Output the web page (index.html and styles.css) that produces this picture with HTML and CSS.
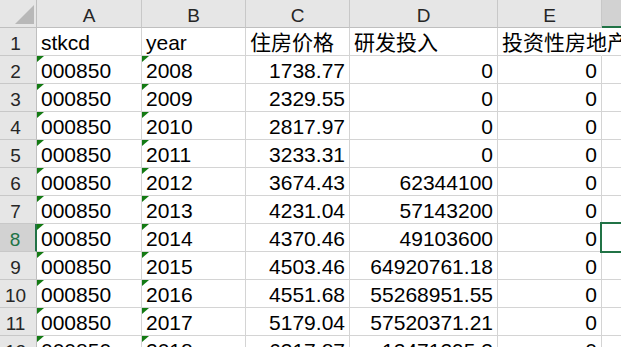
FILE: index.html
```html
<!DOCTYPE html>
<html lang="zh">
<head>
<meta charset="utf-8">
<title>Sheet</title>
<link rel="stylesheet" href="styles.css">
</head>
<body>
<div class="sheet">
  <div class="corner"></div>
  <div class="ch">A</div>
  <div class="ch">B</div>
  <div class="ch">C</div>
  <div class="ch">D</div>
  <div class="ch">E</div>
  <div class="ch sel"></div>

  <div class="rh">1</div>
  <div class="cell">stkcd</div>
  <div class="cell">year</div>
  <div class="cell">住房价格</div>
  <div class="cell">研发投入</div>
  <div class="cell ovf">投资性房地产</div>
  <div class="cell"></div>

  <div class="rh">2</div>
  <div class="cell flag">000850</div>
  <div class="cell flag">2008</div>
  <div class="cell num">1738.77</div>
  <div class="cell num">0</div>
  <div class="cell num">0</div>
  <div class="cell"></div>

  <div class="rh">3</div>
  <div class="cell flag">000850</div>
  <div class="cell flag">2009</div>
  <div class="cell num">2329.55</div>
  <div class="cell num">0</div>
  <div class="cell num">0</div>
  <div class="cell"></div>

  <div class="rh">4</div>
  <div class="cell flag">000850</div>
  <div class="cell flag">2010</div>
  <div class="cell num">2817.97</div>
  <div class="cell num">0</div>
  <div class="cell num">0</div>
  <div class="cell"></div>

  <div class="rh">5</div>
  <div class="cell flag">000850</div>
  <div class="cell flag">2011</div>
  <div class="cell num">3233.31</div>
  <div class="cell num">0</div>
  <div class="cell num">0</div>
  <div class="cell"></div>

  <div class="rh">6</div>
  <div class="cell flag">000850</div>
  <div class="cell flag">2012</div>
  <div class="cell num">3674.43</div>
  <div class="cell num">62344100</div>
  <div class="cell num">0</div>
  <div class="cell"></div>

  <div class="rh">7</div>
  <div class="cell flag">000850</div>
  <div class="cell flag">2013</div>
  <div class="cell num">4231.04</div>
  <div class="cell num">57143200</div>
  <div class="cell num">0</div>
  <div class="cell"></div>

  <div class="rh sel">8</div>
  <div class="cell flag">000850</div>
  <div class="cell flag">2014</div>
  <div class="cell num">4370.46</div>
  <div class="cell num">49103600</div>
  <div class="cell num">0</div>
  <div class="cell active"></div>

  <div class="rh">9</div>
  <div class="cell flag">000850</div>
  <div class="cell flag">2015</div>
  <div class="cell num">4503.46</div>
  <div class="cell num">64920761.18</div>
  <div class="cell num">0</div>
  <div class="cell"></div>

  <div class="rh">10</div>
  <div class="cell flag">000850</div>
  <div class="cell flag">2016</div>
  <div class="cell num">4551.68</div>
  <div class="cell num">55268951.55</div>
  <div class="cell num">0</div>
  <div class="cell"></div>

  <div class="rh">11</div>
  <div class="cell flag">000850</div>
  <div class="cell flag">2017</div>
  <div class="cell num">5179.04</div>
  <div class="cell num">57520371.21</div>
  <div class="cell num">0</div>
  <div class="cell"></div>

  <div class="rh">12</div>
  <div class="cell flag">000850</div>
  <div class="cell flag">2018</div>
  <div class="cell num">6317.87</div>
  <div class="cell num">12471295.3</div>
  <div class="cell num">0</div>
  <div class="cell"></div>
</div>
</body>
</html>
```

FILE: styles.css
```css
html, body {
  margin: 0;
  padding: 0;
  background: #ffffff;
  overflow: hidden;
}

.sheet {
  display: grid;
  grid-template-columns: 37px 105px 104px 104px 148px 104px 104px;
  grid-auto-rows: 28px;
  width: 621px;
  height: 347px;
  overflow: hidden;
  font-family: "Liberation Sans", "Noto Sans CJK SC", sans-serif;
}

.sheet > div {
  box-sizing: border-box;
  position: relative;
  display: flex;
  align-items: flex-end;
  white-space: nowrap;
}

.corner {
  background: #e6e6e6;
  border-right: 1px solid #bfbfbf;
  border-bottom: 1px solid #bfbfbf;
}

.corner::after {
  content: "";
  position: absolute;
  right: 2px;
  bottom: 3px;
  width: 0;
  height: 0;
  border-left: 19px solid transparent;
  border-bottom: 19px solid #b8b8b8;
}

.ch {
  background: #e6e6e6;
  border-right: 1px solid #c8c8c8;
  border-bottom: 1px solid #bfbfbf;
  justify-content: center;
  font-size: 19px;
  line-height: 22px;
  color: #262626;
}

.ch.sel {
  background: #d2d2d2;
  border-bottom: 2px solid #217346;
}

.rh {
  background: #e6e6e6;
  border-right: 1px solid #bfbfbf;
  border-bottom: 1px solid #c8c8c8;
  justify-content: center;
  padding-right: 5px;
  font-size: 19px;
  line-height: 22px;
  color: #262626;
}

.rh.sel {
  background: #d2d2d2;
  color: #217346;
  border-right: 2px solid #217346;
}

.cell {
  border-right: 1px solid #d4d4d4;
  border-bottom: 1px solid #d4d4d4;
  padding: 0 4px;
  font-size: 21px;
  line-height: 24px;
  color: #000000;
}

.num {
  justify-content: flex-end;
}

.ovf {
  border-right-color: transparent;
  overflow: visible;
}

.flag::before {
  content: "";
  position: absolute;
  top: 0;
  left: 0;
  width: 0;
  height: 0;
  border-top: 6px solid #137a13;
  border-right: 7px solid transparent;
}

.active::after {
  content: "";
  position: absolute;
  top: -2px;
  left: -2px;
  bottom: -2px;
  right: -2px;
  border: 2px solid #217346;
  z-index: 2;
}
```
